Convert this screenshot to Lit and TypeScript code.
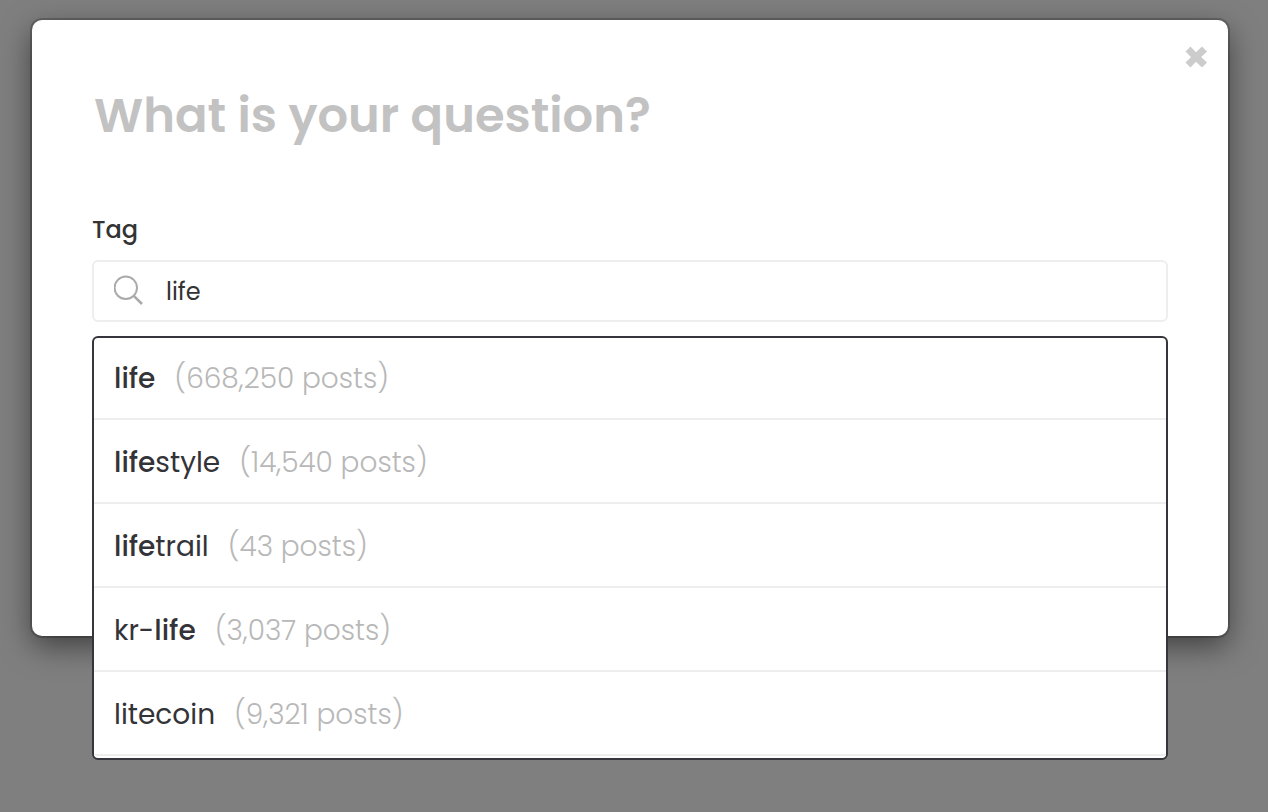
import { LitElement, html, css } from "lit";
import { customElement, property, state } from "lit/decorators.js";

interface Tag {
  name: string;
  posts: number;
}

const TAGS: Tag[] = [
  { name: "life", posts: 668250 },
  { name: "lifestyle", posts: 14540 },
  { name: "lifetrail", posts: 43 },
  { name: "kr-life", posts: 3037 },
  { name: "litecoin", posts: 9321 },
];

@customElement("tag-option")
class TagOption extends LitElement {
  @property() name = "";
  @property({ type: Number }) posts = 0;
  @property() query = "";

  static styles = css`
    .name {
      color: #333338;
    }
    .match {
      font-weight: 500;
    }
    .count {
      margin-left: 19px;
      color: #b8b8b8;
      font-weight: 300;
    }
  `;

  renderName() {
    const at = this.query ? this.name.indexOf(this.query) : -1;
    if (at < 0) return this.name;
    const end = at + this.query.length;
    return html`${this.name.slice(0, at)}<span class="match">${this.name.slice(at, end)}</span>${this.name.slice(end)}`;
  }

  render() {
    return html`<span class="name">${this.renderName()}</span><span class="count">(${this.posts.toLocaleString("en-US")} posts)</span>`;
  }
}

@customElement("app-root")
class AppRoot extends LitElement {
  @state() query = "life";

  static styles = css`
    :host {
      display: block;
      box-sizing: border-box;
      min-height: 100vh;
      padding: 20px 40px 52px 32px;
      background: #7f7f7f;
      color: #333333;
      font-family: Poppins, Inter, sans-serif;
    }
    .dialog {
      position: relative;
      padding: 62px 60px 314px;
      border-radius: 10px;
      background: #ffffff;
      box-shadow:
        0 0 0 2px rgba(0, 0, 0, 0.2),
        0 10px 30px rgba(0, 0, 0, 0.5);
    }
    .close {
      position: absolute;
      top: 21px;
      right: 16px;
      display: flex;
      padding: 4px;
      border: 0;
      background: none;
      cursor: pointer;
    }
    input {
      box-sizing: border-box;
      width: 100%;
      min-width: 0;
      border: 0;
      outline: none;
      background: none;
      color: inherit;
      font-family: inherit;
    }
    .title {
      display: block;
      height: 68px;
      padding: 0 2px;
      font-size: 48px;
      font-weight: 600;
    }
    .title::placeholder {
      color: #c2c2c2;
      opacity: 1;
    }
    .label {
      display: block;
      margin-top: 62px;
      font-size: 24px;
      line-height: 36px;
      font-weight: 500;
    }
    .field {
      position: relative;
      margin-top: 12px;
    }
    .search {
      display: flex;
      align-items: center;
      gap: 20px;
      padding: 0 20px;
      border: 2px solid #eeeeee;
      border-radius: 6px;
    }
    .search svg {
      flex: none;
    }
    .query {
      height: 58px;
      padding: 0;
      font-size: 24px;
    }
    .menu {
      position: absolute;
      top: calc(100% + 14px);
      left: 0;
      right: 0;
      margin: 0;
      padding: 0 0 2px;
      border: 2px solid #36353b;
      border-radius: 6px;
      background: #ffffff;
      list-style: none;
      font-size: 28px;
      line-height: 42px;
    }
    .row {
      padding: 22px 20px 18px;
      border-bottom: 2px solid #eeeeee;
    }
    .row:first-child {
      padding-top: 20px;
    }
  `;

  render() {
    return html`
      <section class="dialog" role="dialog" aria-label="Ask a question">
        <button class="close" type="button" aria-label="Close">
          <svg width="24" height="24" viewBox="0 0 24 24">
            <path fill="#cccccc" d="M6.5 1.5 12 7.2 18 1.5 23 6.5 17.2 12 23 17.5 18 22.5 12 16.8 6.5 22.5 1.5 17.5 7 12 1.5 6.5Z" />
          </svg>
        </button>
        <input class="title" type="text" aria-label="Question" placeholder="What is your question?" />
        <label class="label" for="tag">Tag</label>
        <div class="field">
          <div class="search">
            <svg width="32" height="32" viewBox="0 0 32 32" fill="none" stroke="#aaaaaa" stroke-width="2">
              <circle cx="11.8" cy="12.8" r="11.2" />
              <path d="M19.8 20.8 28 29" stroke-width="2.5" />
            </svg>
            <input
              class="query"
              id="tag"
              type="text"
              autocomplete="off"
              .value=${this.query}
              @input=${(e: Event) => (this.query = (e.target as HTMLInputElement).value)}
            />
          </div>
          <ul class="menu">
            ${TAGS.map(
              (t) => html`<li class="row"><tag-option .name=${t.name} .posts=${t.posts} .query=${this.query}></tag-option></li>`
            )}
          </ul>
        </div>
      </section>
    `;
  }
}
